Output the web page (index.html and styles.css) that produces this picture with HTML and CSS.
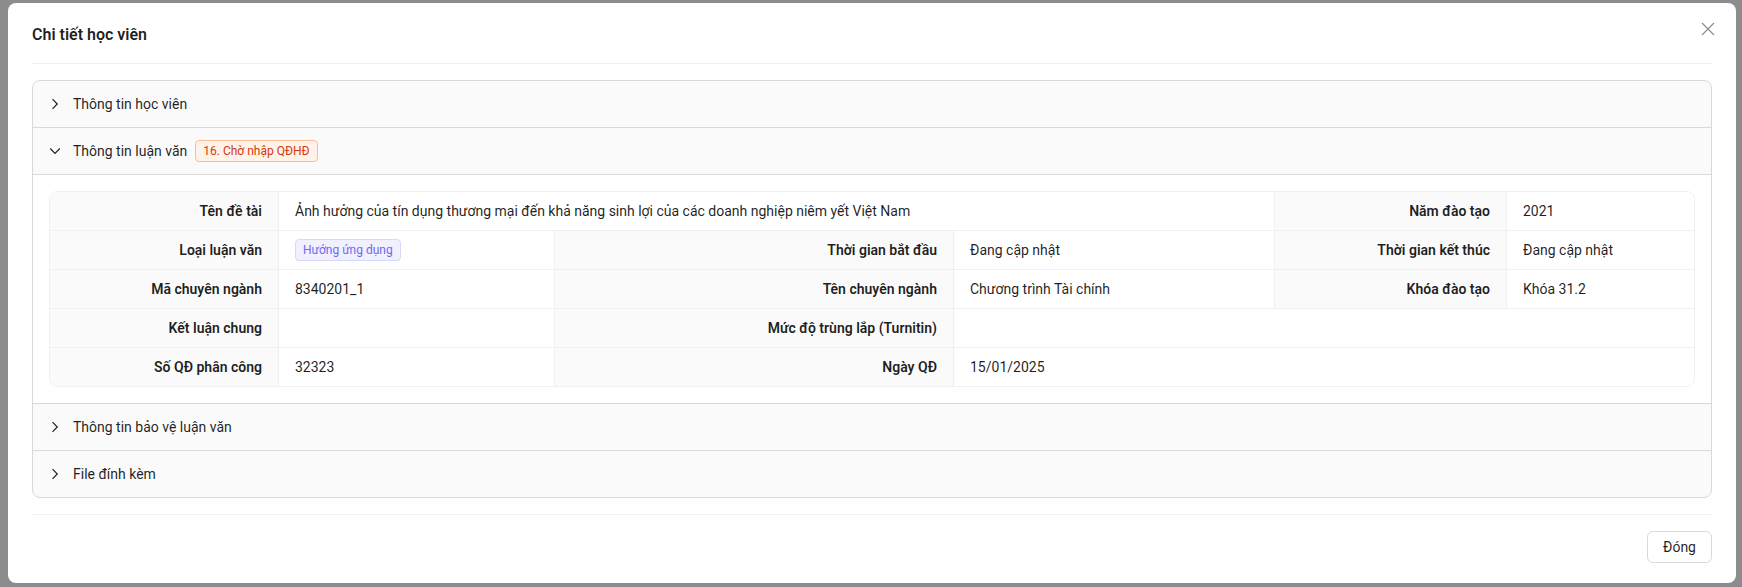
FILE: index.html
```html
<!DOCTYPE html>
<html lang="vi">
<head>
    <meta charset="UTF-8">
    <meta name="viewport" content="width=device-width, initial-scale=1.0">
    <title>Chi tiết học viên</title>
    <link rel="stylesheet" href="styles.css">
</head>
<body>
    <div class="modal">
        <button class="modal-close" aria-label="Close">
            <svg width="14" height="14" viewBox="0 0 14 14"><path d="M1 1L13 13M13 1L1 13" stroke="currentColor" stroke-width="1.2" fill="none"/></svg>
        </button>
        <div class="modal-title">Chi tiết học viên</div>

        <div class="collapse">
            <div class="collapse-item">
                <div class="collapse-header">
                    <span class="arrow"><svg width="12" height="12" viewBox="0 0 12 12"><polyline points="3.5,1.2 8.3,6 3.5,10.8" stroke="currentColor" stroke-width="1.2" fill="none"/></svg></span>
                    <span>Thông tin học viên</span>
                </div>
            </div>

            <div class="collapse-item active">
                <div class="collapse-header">
                    <span class="arrow"><svg width="12" height="12" viewBox="0 0 12 12"><polyline points="1.2,3.5 6,8.3 10.8,3.5" stroke="currentColor" stroke-width="1.2" fill="none"/></svg></span>
                    <span>Thông tin luận văn</span>
                    <span class="tag tag-volcano">16. Chờ nhập QĐHĐ</span>
                </div>
                <div class="collapse-content">
                    <div class="desc-view">
                        <table class="desc">
                            <colgroup>
                                <col class="c1">
                                <col class="c2">
                                <col class="c3">
                                <col class="c4">
                                <col class="c5">
                                <col>
                            </colgroup>
                            <tr>
                                <th>Tên đề tài</th>
                                <td colspan="3">Ảnh hưởng của tín dụng thương mại đến khả năng sinh lợi của các doanh nghiệp niêm yết Việt Nam</td>
                                <th>Năm đào tạo</th>
                                <td>2021</td>
                            </tr>
                            <tr>
                                <th>Loại luận văn</th>
                                <td><span class="tag tag-purple">Hướng ứng dụng</span></td>
                                <th>Thời gian bắt đầu</th>
                                <td>Đang cập nhật</td>
                                <th>Thời gian kết thúc</th>
                                <td>Đang cập nhật</td>
                            </tr>
                            <tr>
                                <th>Mã chuyên ngành</th>
                                <td>8340201_1</td>
                                <th>Tên chuyên ngành</th>
                                <td>Chương trình Tài chính</td>
                                <th>Khóa đào tạo</th>
                                <td>Khóa 31.2</td>
                            </tr>
                            <tr>
                                <th>Kết luận chung</th>
                                <td></td>
                                <th>Mức độ trùng lắp (Turnitin)</th>
                                <td colspan="3"></td>
                            </tr>
                            <tr>
                                <th>Số QĐ phân công</th>
                                <td>32323</td>
                                <th>Ngày QĐ</th>
                                <td colspan="3">15/01/2025</td>
                            </tr>
                        </table>
                    </div>
                </div>
            </div>

            <div class="collapse-item">
                <div class="collapse-header">
                    <span class="arrow"><svg width="12" height="12" viewBox="0 0 12 12"><polyline points="3.5,1.2 8.3,6 3.5,10.8" stroke="currentColor" stroke-width="1.2" fill="none"/></svg></span>
                    <span>Thông tin bảo vệ luận văn</span>
                </div>
            </div>

            <div class="collapse-item">
                <div class="collapse-header">
                    <span class="arrow"><svg width="12" height="12" viewBox="0 0 12 12"><polyline points="3.5,1.2 8.3,6 3.5,10.8" stroke="currentColor" stroke-width="1.2" fill="none"/></svg></span>
                    <span>File đính kèm</span>
                </div>
            </div>
        </div>

        <div class="modal-footer">
            <button class="btn">Đóng</button>
        </div>
    </div>
</body>
</html>
```

FILE: styles.css
```css
body {
    margin: 0;
    background-color: #8c8c8c; /* nền mờ phía sau modal */
    font-family: "Segoe UI", Roboto, "Noto Sans", sans-serif;
    font-size: 14px;
    color: rgba(0, 0, 0, 0.88);
    height: 100vh;
    overflow: hidden;
}

.modal {
    position: relative;
    margin: 3px 6px 0 8px;
    background: #ffffff;
    border-radius: 8px;
    padding: 20px 24px;
}

.modal-close {
    position: absolute;
    top: 15px;
    right: 17px;
    width: 22px;
    height: 22px;
    padding: 0;
    border: none;
    background: transparent;
    color: rgba(0, 0, 0, 0.45);
    display: flex;
    align-items: center;
    justify-content: center;
    cursor: pointer;
}

.modal-title {
    font-size: 16px;
    font-weight: 600;
    line-height: 24px;
    padding-bottom: 16px;
    margin-bottom: 16px;
    border-bottom: 1px solid #f0f0f0;
}

.collapse {
    border: 1px solid #d9d9d9;
    border-radius: 8px;
    background-color: #fafafa;
    overflow: hidden;
}

.collapse-item {
    border-bottom: 1px solid #d9d9d9;
}

.collapse-item:last-child {
    border-bottom: none;
}

.collapse-header {
    display: flex;
    align-items: center;
    gap: 12px;
    padding: 12px 16px;
    line-height: 22px;
    cursor: pointer;
}

.collapse-header .tag {
    margin-left: -4px;
}

.arrow {
    width: 12px;
    height: 12px;
    display: flex;
}

.collapse-content {
    background: #ffffff;
    border-top: 1px solid #d9d9d9;
    padding: 16px;
}

.tag {
    display: inline-block;
    padding: 0 7px;
    font-size: 12px;
    line-height: 20px;
    border: 1px solid;
    border-radius: 4px;
    vertical-align: top;
}

.tag-volcano {
    color: #d4380d;
    background: #fff2e8;
    border-color: #ffbb96;
}

.tag-purple {
    color: #6e6af0;
    background: #f0f0ff;
    border-color: #d6d8fb;
}

.desc-view {
    border: 1px solid #f0f0f0;
    border-radius: 8px;
    overflow: hidden;
}

.desc {
    width: 100%;
    table-layout: fixed;
    border-collapse: separate;
    border-spacing: 0;
}

.desc .c1 { width: 229px; }
.desc .c2 { width: 276px; }
.desc .c3 { width: 399px; }
.desc .c4 { width: 321px; }
.desc .c5 { width: 232px; }

.desc th,
.desc td {
    padding: 8px 16px;
    line-height: 22px;
    height: 22px;
    border-right: 1px solid #f0f0f0;
    border-bottom: 1px solid #f0f0f0;
}

.desc tr:last-child th,
.desc tr:last-child td {
    border-bottom: none;
}

.desc th:last-child,
.desc td:last-child {
    border-right: none;
}

.desc th {
    background-color: #fafafa;
    text-align: right;
    font-weight: 600;
}

.desc td {
    text-align: left;
}

.modal-footer {
    margin-top: 16px;
    padding-top: 16px;
    border-top: 1px solid #f0f0f0;
    display: flex;
    justify-content: flex-end;
}

.btn {
    height: 32px;
    padding: 4px 15px;
    font: inherit;
    color: inherit;
    background: #ffffff;
    border: 1px solid #d9d9d9;
    border-radius: 6px;
    cursor: pointer;
}
```
